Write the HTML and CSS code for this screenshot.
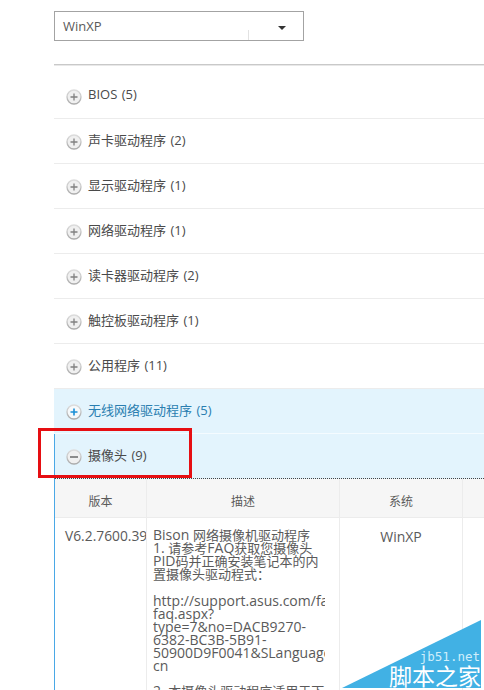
FILE: index.html
```html
<!DOCTYPE html>
<html lang="zh-CN">

<head>
    <meta charset="UTF-8">
    <title>驱动程序下载</title>
    <link rel="stylesheet" href="styles.css">
</head>

<body>
    <svg class="defs" width="0" height="0">
        <defs>
            <linearGradient id="ring" x1="0" y1="0" x2="0" y2="1">
                <stop offset="0" stop-color="#dddddd"/>
                <stop offset="1" stop-color="#aaaaaa"/>
            </linearGradient>
        </defs>
        <symbol id="plus" viewBox="0 0 16 16">
            <circle cx="8" cy="8" r="7" fill="#f0f0f0" stroke="url(#ring)" stroke-width="1.3"/>
            <path d="M4.5 8h7M8 4.5v7" stroke="#808080" stroke-width="1.3"/>
        </symbol>
        <symbol id="plus-blue" viewBox="0 0 16 16">
            <circle cx="8" cy="8" r="7" fill="#f6f9fb" stroke="url(#ring)" stroke-width="1.3"/>
            <path d="M4.5 8h7M8 4.5v7" stroke="#1b8fd6" stroke-width="1.6"/>
        </symbol>
        <symbol id="minus" viewBox="0 0 16 16">
            <circle cx="8" cy="8" r="7" fill="#f0f0f0" stroke="url(#ring)" stroke-width="1.3"/>
            <path d="M4 8h8" stroke="#808080" stroke-width="1.8"/>
        </symbol>
    </svg>

    <div class="select">
        <span class="select-value">WinXP</span>
        <span class="select-tick"></span>
        <span class="select-caret"></span>
    </div>

    <div class="rule"></div>

    <ul class="groups">
        <li class="group"><svg class="toggle"><use href="#plus"/></svg>BIOS (5)</li>
        <li class="group"><svg class="toggle"><use href="#plus"/></svg>声卡驱动程序 (2)</li>
        <li class="group"><svg class="toggle"><use href="#plus"/></svg>显示驱动程序 (1)</li>
        <li class="group"><svg class="toggle"><use href="#plus"/></svg>网络驱动程序 (1)</li>
        <li class="group"><svg class="toggle"><use href="#plus"/></svg>读卡器驱动程序 (2)</li>
        <li class="group"><svg class="toggle"><use href="#plus"/></svg>触控板驱动程序 (1)</li>
        <li class="group"><svg class="toggle"><use href="#plus"/></svg>公用程序 (11)</li>
        <li class="group group-hover"><svg class="toggle"><use href="#plus-blue"/></svg>无线网络驱动程序 (5)</li>
        <li class="group group-open"><svg class="toggle"><use href="#minus"/></svg>摄像头 (9)</li>
    </ul>

    <div class="detail">
        <div class="cell head col-version">版本</div>
        <div class="cell head col-desc">描述</div>
        <div class="cell head col-system">系统</div>
        <div class="cell head col-extra"><span class="head-cut">文件</span></div>

        <div class="cell col-version version">V6.2.7600.39</div>
        <div class="cell col-desc desc">
            <div class="desc-clip">
                <p>Bison <span class="zh">网络摄像机驱动程序</span><br>1. <span class="zh">请参考</span>FAQ<span class="zh">获取您摄像头</span><br>PID<span class="zh">码并正确安装笔记本的内</span><br><span class="zh">置摄像头驱动程式：</span></p>
                <p class="link">http://support.asus.com/faq/<br>faq.aspx?<br>type=7&amp;no=DACB9270-<br>6382-BC3B-5B91-<br>50900D9F0041&amp;SLanguage=<br>cn</p>
                <p>2. <span class="zh">本摄像头驱动程序适用于下</span></p>
            </div>
        </div>
        <div class="cell col-system system">WinXP</div>
        <div class="cell col-extra"></div>
    </div>

    <div class="callout"></div>

    <div class="stamp">
        <div class="stamp-shape"></div>
        <div class="stamp-url">jb51.net</div>
        <div class="stamp-name">脚本之家</div>
    </div>
</body>

</html>
```

FILE: styles.css
```css
* {
    margin: 0;
    padding: 0;
    box-sizing: border-box;
}

html,
body {
    height: 690px;
    overflow: hidden;
}

body {
    position: relative;
    width: 484px;
    padding: 11px 0 0 54px;
    background: #ffffff;
    font-family: "Open Sans", "Noto Sans CJK SC", sans-serif;
    font-size: 13px;
    color: #5a5a5a;
}

.defs {
    position: absolute;
}

/* Select */
.select {
    display: flex;
    align-items: center;
    width: 250px;
    height: 30px;
    padding-left: 8px;
    border: 1px solid #a3a3a3;
}

.select-value {
    flex: 1;
    margin-top: -1px;
}

.select-tick {
    align-self: flex-end;
    width: 1px;
    height: 10px;
    background: #e2e2e2;
}

.select-caret {
    width: 0;
    height: 0;
    margin: 3px 17px 0 29px;
    border-top: 4px solid #333333;
    border-left: 4px solid transparent;
    border-right: 4px solid transparent;
}

.rule {
    width: 430px;
    height: 2px;
    margin-top: 23px;
    background: #c9c9c9;
    border-bottom: 1px solid #e8e8e8;
}

/* Groups */
.groups {
    width: 430px;
    margin-top: 8px;
    list-style: none;
}

.group {
    display: flex;
    align-items: center;
    height: 45px;
    padding: 0 0 4px 12px;
    border-bottom: 1px solid #ececec;
    color: #4a4a4a;
    word-spacing: 1px;
    white-space: nowrap;
}

.toggle {
    flex: none;
    width: 16px;
    height: 16px;
    margin: 5px 6px 0 0;
}

.group-hover {
    background: #e3f4fd;
    border-bottom: 1px solid #f4fbff;
    color: #2a7eb0;
}

.group-open {
    background: #e3f4fd;
    border-bottom: 1px dotted #444444;
    border-left: 1px solid #4aa8e6;
    padding-left: 11px;
}

/* Detail table */
.detail {
    display: grid;
    grid-template-columns: 92px 193px 123px 40px;
    grid-template-rows: 39px 180px;
    width: 430px;
    border-left: 1px solid #4aa8e6;
    overflow: hidden;
}

.cell {
    border-right: 1px solid #ececec;
    overflow: hidden;
}

.head {
    display: flex;
    align-items: center;
    justify-content: center;
    padding-top: 6px;
    background: #f6f6f6;
    border-bottom: 1px solid #ececec;
    font-size: 12px;
}

.head-cut {
    margin-left: 40px;
    color: #cc2222;
    white-space: nowrap;
}

.version {
    padding: 8px 0 0 10px;
    font-size: 13.8px;
    white-space: nowrap;
}

.desc {
    padding: 10px 0 0 6px;
    font-size: 14px;
    line-height: 13px;
}

.desc-clip {
    width: 172px;
    overflow: hidden;
}

.desc p {
    margin-bottom: 14px;
    white-space: nowrap;
}

.desc .link {
    margin-bottom: 12px;
}

.zh {
    font-size: 13px;
    line-height: 0;
}

.system {
    padding-top: 9px;
    font-size: 14px;
    text-align: center;
}

/* Red annotation box */
.callout {
    position: absolute;
    left: 38px;
    top: 428px;
    width: 154px;
    height: 50px;
    border: 3px solid #e60e12;
}

/* Watermark */
.stamp {
    position: absolute;
    left: 342px;
    top: 620px;
    width: 139px;
    height: 68px;
}

.stamp-shape {
    position: absolute;
    inset: 0;
    background: #41b1e4;
    clip-path: polygon(100% 0, 100% 100%, 0 100%);
}

.stamp-url {
    position: absolute;
    right: 1px;
    top: 30px;
    font-family: "DejaVu Sans Mono", monospace;
    font-size: 12.5px;
    line-height: 14px;
    color: #cfeefb;
}

.stamp-name {
    position: absolute;
    right: 0;
    top: 43px;
    font-family: "Noto Sans CJK SC", sans-serif;
    font-size: 23px;
    line-height: 25px;
    color: #ffffff;
    white-space: nowrap;
}
```
